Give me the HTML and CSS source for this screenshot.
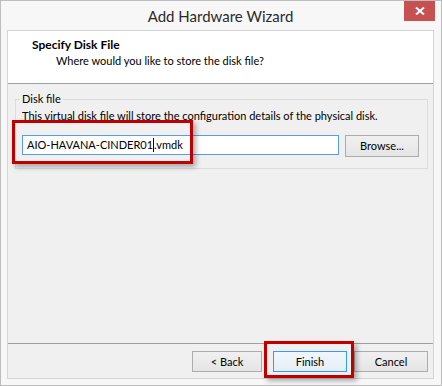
FILE: index.html
```html
<!DOCTYPE html>
<html lang="en">
  <head>
    <meta charset="UTF-8" />
    <title>Add Hardware Wizard</title>
    <link rel="stylesheet" href="styles.css">
  </head>
  <body>
    <div class="window">
      <div class="titlebar">
        <span class="title">Add Hardware Wizard</span>
        <span class="close">
          <svg width="10" height="8" viewBox="0 0 10 8">
            <path d="M1 0.5 L9 7.5 M9 0.5 L1 7.5" stroke="#fff" stroke-width="2" />
          </svg>
        </span>
      </div>

      <div class="client">
        <div class="header">
          <div class="heading">Specify Disk File</div>
          <div class="subheading">Where would you like to store the disk file?</div>
        </div>

        <div class="content">
          <fieldset class="group">
            <legend>Disk file</legend>
            <p class="hint">This virtual disk file will store the configuration details of the physical disk.</p>
            <div class="file-row">
              <div class="textbox">AIO-HAVANA-CINDER01<span class="caret"></span>.vmdk</div>
              <button class="btn btn-browse">Browse...</button>
            </div>
          </fieldset>
          <!-- annotation -->
          <div class="mark mark-file"></div>
        </div>

        <div class="footer">
          <button class="btn btn-back">&lt; Back</button>
          <button class="btn btn-default">Finish</button>
          <button class="btn btn-cancel">Cancel</button>
          <div class="mark mark-finish"></div>
        </div>
      </div>
    </div>
  </body>
</html>
```

FILE: styles.css
```css
* {
  box-sizing: border-box;
}
body {
  margin: 0;
  font-family: Lato, "Noto Sans", sans-serif;
  font-size: 11px;
  color: #000;
  background: #fff;
}
.window {
  width: 442px;
  height: 386px;
  border: 1px solid #bdbdbd;
  background: #f7f7f7;
  padding: 0 7px 6px 6px;
  display: flex;
  flex-direction: column;
}
.titlebar {
  position: relative;
  height: 29px;
  flex-shrink: 0;
  text-align: center;
}
.title {
  display: inline-block;
  line-height: 30px;
  font-size: 15px;
  color: #2b2b2b;
}
.close {
  position: absolute;
  top: 0;
  right: -1px;
  width: 31px;
  height: 20px;
  background: #c75050;
  display: flex;
  align-items: center;
  justify-content: center;
}
.client {
  flex: 1;
  border: 1px solid #d4d4d4;
  background: #f0f0f0;
  display: flex;
  flex-direction: column;
}
.header {
  height: 53px;
  flex-shrink: 0;
  background: #fff;
  border-bottom: 1px solid #a0a0a0;
  padding: 6px 0 0 24px;
  line-height: 16px;
}
.heading {
  font-weight: bold;
  font-size: 12px;
}
.subheading {
  margin-left: 24px;
}
.content {
  position: relative;
  flex: 1;
  padding: 7px 5px 0 7px;
}
.group {
  margin: 0;
  border: 1px solid #dcdcdc;
  padding: 0 8px 11px 6px;
  line-height: 16px;
}
.group legend {
  padding: 0 2px;
  margin-left: -2px;
}
.hint {
  margin: 1px 0 0;
  white-space: nowrap;
}
.file-row {
  display: flex;
  align-items: flex-start;
  gap: 6px;
  margin-top: 11px;
}
.textbox {
  flex: 1;
  height: 20px;
  border: 1px solid #569de5;
  background: #fff;
  padding: 0 4px;
  line-height: 18px;
}
.caret {
  display: inline-block;
  width: 1px;
  height: 14px;
  background: #000;
  vertical-align: -3px;
}
.btn {
  font: inherit;
  color: #000;
  height: 22px;
  padding: 0;
  border: 1px solid #acacac;
  background: linear-gradient(#f0f0f0, #e5e5e5);
  line-height: 18px;
}
.btn-browse {
  width: 74px;
}
.footer {
  position: relative;
  height: 35px;
  flex-shrink: 0;
  border-top: 1px solid #a0a0a0;
  display: flex;
  justify-content: flex-end;
  align-items: flex-start;
  padding: 7px 5px 0 0;
}
.footer .btn {
  height: 21px;
}
.btn-back {
  width: 70px;
}
.btn-default {
  width: 74px;
  margin-left: 11px;
  border-color: #3399ff;
  background: linear-gradient(#f0f6fc, #e6eef7);
}
.btn-cancel {
  width: 74px;
  margin-left: 7px;
}
.mark {
  position: absolute;
  border: 3px solid #c00000;
  box-shadow: 3px 3px 5px rgba(0, 0, 0, 0.3);
}
.mark-file {
  left: 4px;
  top: 36px;
  width: 181px;
  height: 44px;
}
.mark-finish {
  left: 256px;
  top: -3px;
  width: 90px;
  height: 37px;
}
```
